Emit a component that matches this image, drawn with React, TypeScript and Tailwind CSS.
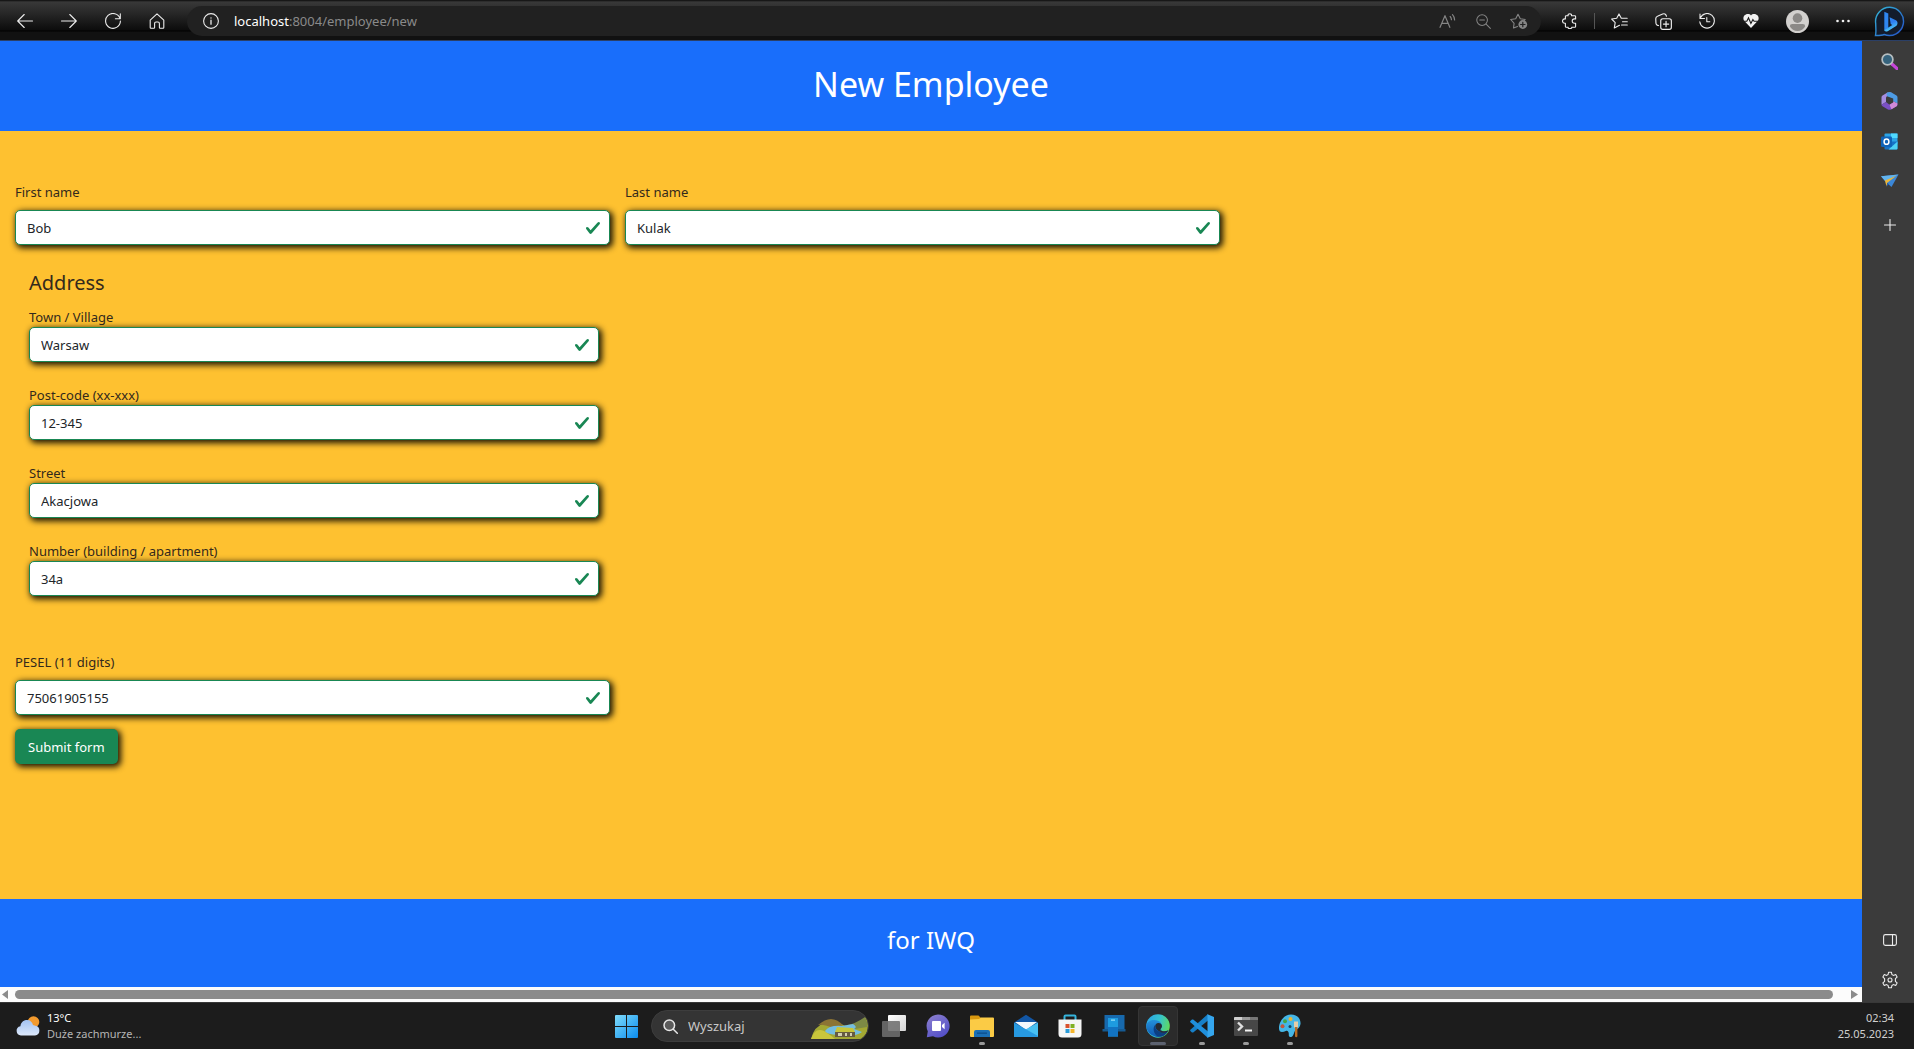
import React from "react";

type IconProps = { className?: string; children: React.ReactNode; box?: string };

function Line({ className = "size-4", children, box = "0 0 16 16" }: IconProps) {
  return (
    <svg viewBox={box} className={className} fill="none" stroke="currentColor" strokeWidth="1.1" strokeLinecap="round" strokeLinejoin="round" aria-hidden="true">
      {children}
    </svg>
  );
}

function Art({ className = "size-6", children, box = "0 0 24 24" }: IconProps) {
  return (
    <svg viewBox={box} className={className} aria-hidden="true">
      {children}
    </svg>
  );
}

function BarButton({ label, className = "w-11", children }: { label: string; className?: string; children: React.ReactNode }) {
  return (
    <button type="button" aria-label={label} className={`flex h-8 shrink-0 items-center justify-center ${className}`}>
      {children}
    </button>
  );
}

function BingLogo() {
  return (
    <Art className="size-[31px]" box="0 0 31 31">
      <defs>
        <linearGradient id="bing-ring" x1="0" y1="0" x2="1" y2="1">
          <stop offset="0" stopColor="#35b8d6" />
          <stop offset="1" stopColor="#2450c8" />
        </linearGradient>
        <linearGradient id="bing-b" x1="0" y1="0" x2="0.4" y2="1">
          <stop offset="0" stopColor="#2a8cf0" />
          <stop offset="0.5" stopColor="#2f7df2" />
          <stop offset="1" stopColor="#4fd0f8" />
        </linearGradient>
      </defs>
      <path d="M15.800 1.300a14.100 14.100 0 1 1-5.600 27.200c-2.400 1.100-6 1-8.700 1 .8-3.300.3-6.200.2-12A14.200 14.200 0 0 1 15.800 1.300Z" fill="#131c2c" stroke="url(#bing-ring)" strokeWidth="1.4" />
      <path d="M10.300 5.800l4 1.700v14.600l-4 2.500Z" fill="#2f86f0" />
      <path d="M15.600 11.200l6.300 3.100c2.200 1.200 2.200 4.600-.2 6l-7.600 4.600c-2.200 1-3.800.4-3.800-.8l8-5-1.600-1.200Z" fill="url(#bing-b)" />
    </Art>
  );
}

function BrowserBar() {
  return (
    <header className="flex h-[41px] shrink-0 items-center border-b border-[#2b3f66] bg-[linear-gradient(to_bottom,#0c0c0c_0px,#383838_2px,#262626_14px,#0c0c0c_30px,#000_31px,#111_32px,#111_40px)] pt-[2px] pl-[3px] text-[#ececec]">
      <BarButton label="Back">
        <Line><path d="M15.500 8H.8M7.200 1.500.7 8l6.500 6.500" /></Line>
      </BarButton>
      <BarButton label="Forward">
        <Line><path d="M.5 8h14.700M8.800 1.500 15.300 8l-6.500 6.500" /></Line>
      </BarButton>
      <BarButton label="Refresh">
        <Line><path d="M15 5.500A7.400 7.400 0 1 0 15.400 8M15.300.8v4.900h-4.900" /></Line>
      </BarButton>
      <BarButton label="Home">
        <Line><path d="M1.200 7.200 8 .9l6.800 6.300v7.300q0 .7-.7.700h-3q-.7 0-.7-.7V10.500Q10.400 9 8.900 9H7.100Q5.600 9 5.600 10.500v4q0 .7-.7.700h-3q-.7 0-.7-.7Z" /></Line>
      </BarButton>
      <div className="ml-2 flex h-[30px] flex-1 items-center rounded-full bg-[#212121]">
        <span className="ml-4 flex">
          <Line><circle cx="8" cy="8" r="7.4" /><path d="M8 7.200v4M8 4.800v.2" strokeWidth="1.3" /></Line>
        </span>
        <p className="ml-[15px] flex-1 text-[13px] leading-5 text-[#8a8a8a]">
          <span className="text-white">localhost</span>:8004/employee/new
        </p>
        <div className="mr-1 flex text-[#858585]">
          <BarButton label="Read aloud" className="w-9">
            <Line className="size-[17px]"><path d="M1 13.500 5.600 2.500l4.600 11M2.700 9.800h5.800M10.500 3.300q1.200 1.300 1.200 3M12.700 1.500q2 2.200 2 5" /></Line>
          </BarButton>
          <BarButton label="Zoom" className="w-9">
            <Line className="size-[15px]"><circle cx="6.500" cy="6.500" r="5.700" /><path d="m10.800 10.800 4.500 4.500M4 6.500h5" /></Line>
          </BarButton>
          <BarButton label="Add to favorites" className="w-9">
            <Line className="h-4 w-[18px]" box="0 0 18 16">
              <path d="m7.500 13.400-4 1.600.6-4.700L.7 6.500l5-.8L8 1.200l2.300 4.500 4.900.8-.8.900" />
              <circle cx="12.800" cy="11.500" r="4.400" fill="currentColor" stroke="none" />
              <path d="M12.800 9.300v4.400M10.600 11.500H15" stroke="#212121" strokeWidth="1.2" />
            </Line>
          </BarButton>
        </div>
      </div>
      <div className="ml-[7px] flex items-center">
        <BarButton label="Extensions">
          <Line><path d="M4.200 2.700h1.900C5.800 1.400 6.700.8 7.800.8s2 .6 1.700 1.900h3.300q.8 0 .8.8v2.400h-1.200a2.200 2.200 0 0 0 0 4.400h1.200v3.200q0 .8-.8.800H9.700c.3 1-.8 1.300-1.900 1.300s-2-.5-1.700-1.300H4.200q-.8 0-.8-.8v-3.200H2.700a2.200 2.200 0 0 1 0-4.400h.7V3.500q0-.8.8-.8Z" /></Line>
        </BarButton>
        <span className="mx-[2px] h-4 w-px bg-[#555]" />
        <BarButton label="Favorites">
          <Line className="h-4 w-[17px]" box="0 0 17 16"><path d="M8.500 12.200 3.300 14.900l.9-5.200L.7 6l5-.7L8 .9l2.300 4.400h5.900M11.500 8.700h4.800M10.500 12h5.800" /></Line>
        </BarButton>
        <BarButton label="Collections">
          <Line className="size-[17px]"><rect x="5.400" y="5.400" width="10" height="10" rx="2" /><path d="M10.400 7.900v5M7.900 10.400h5M3.300 11.800 2.500 11.600Q1 11.200.9 9.700L.7 5.500Q.7 3.700 2.300 3.100L7.200.9q2-.6 3 .8l.6 1.300" /></Line>
        </BarButton>
        <BarButton label="History">
          <Line><path d="M1 1v4.500h4.500M1.300 5A7.300 7.300 0 1 1 .8 8.700M7.800 4.500v4.200h3" /></Line>
        </BarButton>
        <BarButton label="Browser essentials">
          <Art className="size-4" box="0 0 16 16">
            <path d="M8 2.500C6.600.5 3 .6 1.300 2.600.1 4 .2 6 .9 7.600L8 15l7.100-7.400c.8-1.600.8-3.500-.4-5C13 .6 9.400.5 8 2.500Z" fill="#f2f2f2" />
            <path d="M0 8.200h3.800l1.700-3.300 2.400 5.600 2-4 1.200 1.700H16" fill="none" stroke="#1b1b1b" strokeWidth="1.1" />
          </Art>
        </BarButton>
        <BarButton label="Profile" className="w-12">
          <Art className="size-[23px]">
            <circle cx="12" cy="12" r="12" fill="#d2d0ce" />
            <circle cx="12" cy="8.500" r="5" fill="#8b8987" />
            <path d="M4 17q0-2.500 2.500-2.500h11Q20 14.500 20 17q-2.500 5-8 5t-8-5Z" fill="#8b8987" />
          </Art>
        </BarButton>
        <BarButton label="Settings and more">
          <Art className="size-4" box="0 0 16 16"><g fill="#f0f0f0"><circle cx="2.500" cy="8" r="1.300" /><circle cx="8" cy="8" r="1.300" /><circle cx="13.500" cy="8" r="1.300" /></g></Art>
        </BarButton>
        <BarButton label="Bing" className="w-[49px]"><BingLogo /></BarButton>
      </div>
    </header>
  );
}

function SideButton({ label, children }: { label: string; children: React.ReactNode }) {
  return (
    <button type="button" aria-label={label} className="flex h-10 w-full items-center justify-center">
      {children}
    </button>
  );
}

function EdgeSidebar() {
  return (
    <aside className="flex w-[52px] shrink-0 flex-col bg-[#3b3b3b] pl-[3px] text-[#ececec]">
      <SideButton label="Search">
        <Art className="size-[17px]" box="0 0 17 17">
          <path d="m11 11 5 4.500" stroke="#c445d8" strokeWidth="3.2" strokeLinecap="round" />
          <circle cx="6.500" cy="6.500" r="5.400" fill="#35637d" stroke="#b5bdc0" strokeWidth="1.7" />
        </Art>
      </SideButton>
      <SideButton label="Microsoft 365">
        <Art className="h-[18px] w-[17px]" box="0 0 17 18">
          <path d="M6.500.5 1.500 3.500Q.5 4.200.5 5.500v7.200l4.500-2.600V6Q5 4.800 6 4.200L10.500.4Z" fill="#a58be0" />
          <path d="M6.500.5Q8.500-.4 10.500.5l5 3q1 .7 1 2v6l-4.300-2.300V6.500L6 4.200 5.500 1Z" fill="#4d9be4" />
          <path d="M.5 12.700l4.500-2.600 3.500 2.600 3.700-2.300 4.300 1v1.300q0 .8-1 1.500l-5 3q-2 1-4 0l-5-3Q.5 13.500.5 12.700Z" fill="#7a4fc4" />
          <path d="m12.200 9.200 4.300 2.300-.5 2.500-5.500 3.200-2-4.500 3.700-2.300Z" fill="#d089d8" />
        </Art>
      </SideButton>
      <SideButton label="Outlook">
        <Art className="size-[17px]" box="0 0 17 17">
          <rect x="3.500" y=".5" width="13" height="11" rx="1" fill="#2ba4e6" />
          <path d="M3.500 8.500h13v7q0 1-1 1h-11q-1 0-1-1Z" fill="#1672c6" />
          <path d="m16.500 8.500-9 8h8q1 0 1-1Z" fill="#4bd0f4" />
          <path d="M10 .5h6.500V5H10Z" fill="#50d9ff" />
          <rect y="3.500" width="11" height="10.500" rx="1.200" fill="#0f63b8" />
          <ellipse cx="5.500" cy="8.700" rx="2.400" ry="2.600" fill="none" stroke="#fff" strokeWidth="1.5" />
        </Art>
      </SideButton>
      <SideButton label="Drop">
        <Art className="h-[14px] w-[18px]" box="0 0 18 14">
          <path d="M0 2.200 17.500.5 10.500 13 6 9Z" fill="#3b87d8" />
          <path d="M0 2.200 17.500.5 4.200 7.200Z" fill="#62b4ee" />
          <path d="M3.900 6.500 15.500 1.800 6.300 8.700 5.500 12.500Z" fill="#e9b63c" />
          <path d="m5.500 12.500.8-3.800L8 10.200Z" fill="#2459a8" />
        </Art>
      </SideButton>
      <div className="mt-1">
        <SideButton label="Customize sidebar">
          <Line className="size-3" box="0 0 12 12"><path d="M6 .5v11M.5 6h11" /></Line>
        </SideButton>
      </div>
      <div className="mt-auto pb-[2px]">
        <SideButton label="Hide sidebar">
          <Line className="h-3 w-[14px]" box="0 0 14 12"><rect x=".6" y=".6" width="12.800" height="10.800" rx="1.800" /><path d="M9.500.6v10.800" /></Line>
        </SideButton>
        <SideButton label="Sidebar settings">
          <Line className="size-[18px]" box="0 0 18 18">
            <circle cx="9" cy="9" r="2" />
            <path d="M7.600 1.200h2.800l.5 2.300 1.500.9 2.300-.8 1.400 2.500-1.700 1.600v2.600l1.700 1.600-1.400 2.500-2.300-.8-1.500.9-.5 2.300H7.600l-.5-2.300-1.500-.9-2.300.8-1.400-2.500 1.700-1.600V7.700L1.900 6.100l1.400-2.500 2.300.8 1.500-.9Z" />
          </Line>
        </SideButton>
      </div>
    </aside>
  );
}

function Field({ id, label, value, labelClass = "mb-2" }: { id: string; label: string; value: string; labelClass?: string }) {
  return (
    <div className="flex flex-col">
      <label htmlFor={id} className={`self-start text-[13px] leading-5 ${labelClass}`}>{label}</label>
      <div className="relative">
        <input
          id={id}
          type="text"
          defaultValue={value}
          className="block h-[35px] w-full rounded-[5px] border border-[#198754] bg-white pr-9 pl-[11px] text-[13px] leading-5 text-[#212529] shadow-[2px_2px_6px_1px_rgba(0,0,0,0.9)] outline-none"
        />
        <svg viewBox="0 0 8 8" aria-hidden="true" className="pointer-events-none absolute inset-y-0 right-[9px] my-auto size-4">
          <path fill="#198754" d="M2.300 6.730.6 4.530c-.4-1.040.46-1.400 1.100-.8l1.100 1.400 3.400-3.800c.6-.63 1.600-.27 1.200.7l-4 4.600c-.43.5-.8.4-1.100.1z" />
        </svg>
      </div>
    </div>
  );
}

function EmployeePage() {
  return (
    <div className="flex min-w-0 flex-1 flex-col">
      <div className="bg-[#196efb] pt-5 pb-6 text-center text-white">
        <h1 className="text-[34px] leading-[46px]">New Employee</h1>
      </div>
      <main className="flex-1 bg-[#fec130] pt-[51px] pr-8 pb-6 pl-[15px] text-[#33291c]">
        <form onSubmit={(e) => e.preventDefault()} className="grid grid-cols-3 gap-x-[15px]">
          <Field id="first-name" label="First name" value="Bob" />
          <Field id="last-name" label="Last name" value="Kulak" />
          <fieldset className="col-start-1 mt-6 flex flex-col gap-[23px] pr-[11px] pl-[14px]">
            <div>
              <h2 className="mb-[10px] text-xl leading-7">Address</h2>
              <Field id="town" label="Town / Village" value="Warsaw" labelClass="" />
            </div>
            <Field id="post-code" label="Post-code (xx-xxx)" value="12-345" labelClass="" />
            <Field id="street" label="Street" value="Akacjowa" labelClass="" />
            <Field id="number" label="Number (building / apartment)" value="34a" labelClass="" />
          </fieldset>
          <div className="col-start-1 mt-14">
            <Field id="pesel" label="PESEL (11 digits)" value="75061905155" />
          </div>
          <div className="col-start-1 mt-[14px]">
            <button type="submit" className="h-[35px] rounded-[5px] bg-[#198754] px-[13px] text-[13px] leading-5 text-white shadow-[2px_2px_6px_1px_rgba(0,0,0,0.9)]">
              Submit form
            </button>
          </div>
        </form>
      </main>
      <footer className="bg-[#196efb] pt-[23px] pb-[29px] text-center text-white">
        <p className="text-2xl leading-9">for IWQ</p>
      </footer>
      <div className="flex h-[15px] items-center bg-[#fcfcfc] px-[2px]">
        <Art className="h-[9px] w-[6px]" box="0 0 6 9"><path d="M6 0v9L0 4.500Z" fill="#8b8b8b" /></Art>
        <div className="mr-[18px] ml-[7px] h-[9px] flex-1 rounded-full bg-[#8b8b8b]" />
        <Art className="mr-[2px] h-[9px] w-[7px]" box="0 0 7 9"><path d="M0 0v9l7-4.500Z" fill="#8b8b8b" /></Art>
      </div>
    </div>
  );
}

function TaskButton({ label, state = "", children }: { label: string; state?: "" | "open" | "active"; children: React.ReactNode }) {
  return (
    <button type="button" aria-label={label} className="relative flex h-[46px] w-11 items-center justify-center">
      {state === "active" && <span className="absolute inset-x-[2px] top-[3px] bottom-[3px] rounded-[4px] border border-[#353535] bg-[#2b2b2b]" />}
      <span className="relative flex">{children}</span>
      {state === "open" && <span className="absolute bottom-1 h-[3px] w-[6px] rounded-full bg-[#9a9a9a]" />}
      {state === "active" && <span className="absolute bottom-1 h-[3px] w-4 rounded-full bg-[#5c6270]" />}
    </button>
  );
}

function Taskbar() {
  return (
    <nav aria-label="Taskbar" className="grid h-[47px] shrink-0 grid-cols-[1fr_auto_1fr] items-center border-t border-[#383838] bg-[#1c1c1c] pb-px">
      <button type="button" className="flex items-center pl-4 text-left text-[11px] leading-4">
        <Art className="h-5 w-6" box="0 0 24 20">
          <defs>
            <linearGradient id="cloud" x1="0" y1="0" x2="0" y2="1"><stop offset="0" stopColor="#a3c3f2" /><stop offset="1" stopColor="#dce8fa" /></linearGradient>
          </defs>
          <circle cx="17.500" cy="6" r="5.800" fill="#f29a2e" />
          <path d="M5 19.500a4.700 4.700 0 0 1-.6-9.300C5 5.500 8.500 4 11 4c3.200 0 5.300 2 6 5l2.300.8A4.900 4.900 0 0 1 19 19.500Z" fill="url(#cloud)" />
        </Art>
        <span className="ml-[7px] flex flex-col">
          <span className="text-white">13°C</span>
          <span className="text-[#b5b5b5]">Duże zachmurze...</span>
        </span>
      </button>

      <div className="flex items-center pl-[2px]">
        <TaskButton label="Start">
          <Art className="size-[23px]" box="0 0 23 23">
            <defs><linearGradient id="win" x1="0" y1="0" x2="1" y2="1"><stop offset="0" stopColor="#7fdcfb" /><stop offset="1" stopColor="#0a8bee" /></linearGradient></defs>
            <path d="M1 0h10v11H0V1q0-1 1-1ZM12 0h10q1 0 1 1v10H12ZM0 12h11v11H1q-1 0-1-1ZM12 12h11v10q0 1-1 1H12Z" fill="url(#win)" />
          </Art>
        </TaskButton>
        <label className="mx-[3px] flex h-8 w-[218px] items-center overflow-hidden rounded-full border border-[#3d3d3d] bg-[#343434] pl-[11px]">
          <svg viewBox="0 0 15 15" className="size-[15px] shrink-0" fill="#5b5b5b" stroke="#e6e6e6" strokeWidth="1.5" strokeLinecap="round" aria-hidden="true">
            <circle cx="6.300" cy="6.300" r="5.300" /><path d="m10.300 10.300 4 4" />
          </svg>
          <input type="search" aria-label="Wyszukaj" placeholder="Wyszukaj" className="ml-[10px] w-0 flex-1 bg-transparent text-[13px] leading-5 text-white outline-none placeholder:text-[#c8c8c8]" />
          <svg viewBox="0 0 57 22" className="mt-1 h-[22px] w-[57px] shrink-0" aria-hidden="true">
            <path d="M0 22Q3 9 14 6q10-3 18 2 3 1 7 0 9-1 16-8 5 11-3 22Z" fill="#a3a833" />
            <path d="M7 8Q14 2 20 2q6 0 12 6l-8 4Q13 7 7 8Z" fill="#8c7434" />
            <path d="M36 8q8-1 18-8 3 6 2 10L44 12Z" fill="#7d8a45" />
            <path d="M14 14q4-6 17-5l11-2q5 3 1 5l8 3q-6 5-23 3-14-1-14-4Z" fill="#74bde0" />
            <path d="m26 10 16 1 2 4H24Z" fill="#c7c53a" />
            <path d="M24 15h20v5H24Z" fill="#665b42" />
            <path d="M27 16h4v3h-4ZM34 16h2v3h-2ZM39 16h2v3h-2Z" fill="#d3d0b0" />
            <path d="M0 22Q4 10 13 14q8 5 11 8Z" fill="#c9c63b" />
          </svg>
        </label>
        <div className="flex">
          <TaskButton label="Task view">
            <Art className="size-6">
              <defs><linearGradient id="tv" x1="0" y1="0" x2="1" y2="1"><stop offset="0" stopColor="#fff" /><stop offset="1" stopColor="#d4d4d4" /></linearGradient></defs>
              <rect x="6" y="1" width="18" height="16" rx="1" fill="url(#tv)" />
              <rect x="0" y="7" width="18" height="16" rx="1" fill="#6e6e6e" fillOpacity=".88" />
            </Art>
          </TaskButton>
          <TaskButton label="Chat">
            <Art className="size-6">
              <defs><linearGradient id="chat" x1="0" y1="0" x2=".6" y2="1"><stop offset="0" stopColor="#8f82cf" /><stop offset="1" stopColor="#5450c8" /></linearGradient></defs>
              <path d="M12 .5A11.500 11.500 0 1 1 7 22.300L.8 23.200 1.800 17.200A11.500 11.500 0 0 1 12 .5Z" fill="url(#chat)" />
              <rect x="6" y="7" width="9" height="10" rx="1" fill="#fff" />
              <path d="m16 11 2.600-2.300v6.600L16 13Z" fill="#fff" />
            </Art>
          </TaskButton>
          <TaskButton label="File Explorer" state="open">
            <Art className="size-6">
              <path d="M0 2.500Q0 1.500 1 1.500h7.500l2 2V8H0Z" fill="#d9980f" />
              <path d="M0 5.500 9 5l2-1.500h12q1 0 1 1V22q0 1-1 1H1q-1 0-1-1Z" fill="#fbcb45" />
              <path d="M4 23v-5q0-2 2-2h12q2 0 2 2v5Z" fill="#1b6fb5" />
              <path d="M7 18.500h10v1.300H7Z" fill="#0c4f8c" />
            </Art>
          </TaskButton>
          <TaskButton label="Mail">
            <Art className="size-6">
              <path d="M0 8.500 12 .8l12 7.700L12 17Z" fill="#1256a5" />
              <path d="M1 8h22L12 16Z" fill="#f3f8fc" />
              <path d="M24 8.500 0 22q0 1 1 1h22q1 0 1-1Z" fill="#48c0f2" />
              <path d="M0 8.500 24 22q0 1-1 1H1q-1 0-1-1Z" fill="#2799e0" />
            </Art>
          </TaskButton>
          <TaskButton label="Microsoft Store">
            <Art className="size-6">
              <path d="M6.500 7V2.500q0-1 1-1h9q1 0 1 1V7" fill="none" stroke="#35b4dc" strokeWidth="2" />
              <path d="M.5 5.500h23V20q0 3.500-3.500 3.500H4Q.5 23.500.5 20Z" fill="#f5f5f5" />
              <path d="M7.500 10h4v4h-4Z" fill="#d9512c" /><path d="M12.500 10h4v4h-4Z" fill="#7fb024" />
              <path d="M7.500 15h4v4h-4Z" fill="#289bd8" /><path d="M12.500 15h4v4h-4Z" fill="#f4b52a" />
            </Art>
          </TaskButton>
          <TaskButton label="Phone Link">
            <Art className="size-6">
              <path d="M2.500 1h20v15H2.500Z" fill="#1769ad" />
              <path d="M.5 15h23v2.500H.5Z" fill="#155a92" />
              <path d="M6 4h10v18.500H6Z" fill="#1e9be0" />
              <path d="M6 13h10v9.500H6Z" fill="#1273c2" />
              <path d="M9 5.500h4v1.200H9Z" fill="#9be4fb" />
            </Art>
          </TaskButton>
          <TaskButton label="Microsoft Edge" state="active">
            <Art className="size-6">
              <defs>
                <linearGradient id="edge-top" x1="0" y1=".3" x2="1" y2=".6"><stop offset="0" stopColor="#2ba6e4" /><stop offset=".5" stopColor="#35c3cd" /><stop offset="1" stopColor="#63dc55" /></linearGradient>
                <linearGradient id="edge-low" x1="0" y1="0" x2="0" y2="1"><stop offset="0" stopColor="#2391dc" /><stop offset="1" stopColor="#1058b0" /></linearGradient>
              </defs>
              <circle cx="12" cy="12" r="11.800" fill="url(#edge-top)" />
              <path d="M.2 12C1 7.500 5 5.800 8.500 6c5 .2 7.500 3.300 7.500 6 0 1.700-1.500 2.300-1.500 3.200 0 1.300 2 2.100 4.200 2.100 1.500 0 3-.5 4-1.200A11.800 11.800 0 0 1 .2 12Z" fill="url(#edge-low)" />
              <path d="M9.500 10.500C7 12.500 6.600 18.500 11 22c4.300 1.800 9-.8 11-5-2 1.200-4.500 1.600-7 1-4.500-1-6.500-4-5.500-7.500Z" fill="#0c3f82" />
              <path d="M16 12c0-2-2.200-3.200-4-2.900-2.200.4-2.900 2.500-2.600 4 .5 2.400 2.600 4.200 5.600 5-.6-.8-1-1.900-.5-2.900.6-1.200 1.500-1.500 1.500-3.200Z" fill="#252b33" />
              <path d="M22.700 16.100q-2 1.200-4 1.200-4.200 0-4.200-2.100l-.3 2.800q3.500 1.500 7.200-.3Z" fill="#2b2b2b" />
            </Art>
          </TaskButton>
          <TaskButton label="Visual Studio Code" state="open">
            <Art className="size-6">
              <path d="M18 0 18 6.500 3.200 18.400Q2.500 18.800 2 18.400L.4 17q-.6-.7 0-1.300Z" fill="#1780c8" />
              <path d="M18 24V17.500L3.200 5.600Q2.500 5.200 2 5.600L.4 7q-.6.7 0 1.300Z" fill="#1f8fdc" />
              <path d="M17.500.2 24 3v18l-6.500 2.800Z" fill="#35a6ee" />
            </Art>
          </TaskButton>
          <TaskButton label="Terminal" state="open">
            <Art className="h-5 w-6" box="0 0 24 20">
              <path d="M1 1h22q1 0 1 1v17q0 1-1 1H1q-1 0-1-1V2q0-1 1-1Z" fill="#474747" />
              <path d="M1 1h7v3H0V2q0-1 1-1Z" fill="#cfcfcf" /><path d="M8 1h8v3H8Z" fill="#9a9a9a" /><path d="M16 1h7q1 0 1 1v2h-8Z" fill="#777" />
              <path d="m4 6.500 4 4-4 4" fill="none" stroke="#e0e0e0" strokeWidth="2.4" />
              <path d="M11 14.500h7" stroke="#f2f2f2" strokeWidth="2" />
            </Art>
          </TaskButton>
          <TaskButton label="Paint" state="open">
            <Art className="size-6">
              <path d="M13 .5c6 0 10 4 9.500 9.500-.3 3-2.500 5-4.500 6-2 1-1.500 3-3 5.500-1.700 2.500-4.500 1.700-4.200-1 .2-2.300-1-4.200-3-3.500-2 .8-4.300 1.600-6 .3C-1 13 3.500.5 13 .5Z" fill="#45b6e6" />
              <circle cx="12.500" cy="5" r="2" fill="#e9b432" /><circle cx="7" cy="7.300" r="2" fill="#45a546" /><circle cx="4.500" cy="12.300" r="2" fill="#c4563b" />
              <circle cx="12" cy="12.500" r="1.500" fill="#16435e" />
              <path d="M16 7.500h4v6h-4Z" fill="#e3cda8" /><path d="M17 13h2.400v9.500q-1.200 1.500-2.400 0Z" fill="#b56a24" />
            </Art>
          </TaskButton>
        </div>
      </div>

      <button type="button" className="flex flex-col items-end pr-5 text-[11px] leading-4 text-[#d0d0d0]">
        <span>02:34</span>
        <span>25.05.2023</span>
      </button>
    </nav>
  );
}

export default function App() {
  return (
    <div className="flex min-h-screen flex-col bg-[#1c1c1c] font-['Noto_Sans',sans-serif]">
      <BrowserBar />
      <div className="flex flex-1">
        <EmployeePage />
        <EdgeSidebar />
      </div>
      <Taskbar />
    </div>
  );
}
